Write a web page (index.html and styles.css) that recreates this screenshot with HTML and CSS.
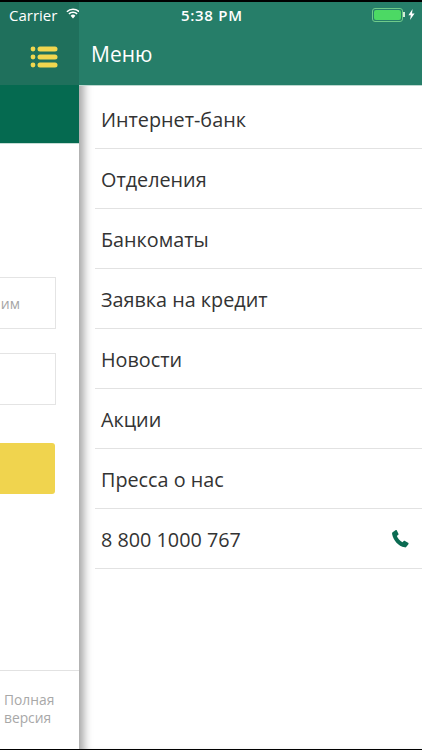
FILE: index.html
```html
<!DOCTYPE html>
<html lang="ru">

<head>
    <meta charset="UTF-8">
    <title>Меню</title>
    <link rel="stylesheet" href="styles.css">
</head>

<body>
    <div class="screen">
        <section class="page">
            <header class="page-head">
                <div class="status status-left">
                    <span>Carrier</span>
                    <svg class="wifi" width="16" height="12" viewBox="0 0 16 12">
                        <path d="M8 11.500 5.600 8.700a3.400 3.400 0 0 1 4.800 0Z" fill="#fff" />
                        <path d="M3.900 6.900a5.800 5.800 0 0 1 8.200 0M1.900 4.700a8.700 8.700 0 0 1 12.200 0" fill="none" stroke="#fff" stroke-width="1.600" />
                    </svg>
                </div>
                <div class="page-bar">
                    <svg class="list-icon" width="28" height="24" viewBox="0 0 28 24" fill="#f0d64f">
                        <circle cx="3" cy="4" r="2.400" />
                        <circle cx="3" cy="12" r="2.400" />
                        <circle cx="3" cy="20" r="2.400" />
                        <rect x="7.500" y="1.500" width="20" height="5" rx="2.500" />
                        <rect x="7.500" y="9.500" width="20" height="5" rx="2.500" />
                        <rect x="7.500" y="17.500" width="20" height="5" rx="2.500" />
                    </svg>
                </div>
            </header>
            <div class="page-sub"></div>
            <div class="page-body">
                <div class="field field-text">им</div>
                <div class="field"></div>
                <div class="submit"></div>
            </div>
            <footer class="page-foot">Полная<br>версия</footer>
        </section>
        <section class="menu">
            <header class="menu-head">
                <div class="status">
                    <span class="time">5:38 PM</span>
                    <div class="battery-wrap">
                        <span class="battery"><span class="battery-fill"></span></span>
                        <span class="battery-tip"></span>
                        <svg class="bolt" width="7" height="11" viewBox="0 0 7 11">
                            <path d="M4.600 0 .4 6.200h2.400L2 11l4.600-6.600H4Z" fill="#fff" />
                        </svg>
                    </div>
                </div>
                <h1 class="menu-title">Меню</h1>
            </header>
            <ul class="menu-list">
                <li>Интернет-банк</li>
                <li>Отделения</li>
                <li>Банкоматы</li>
                <li>Заявка на кредит</li>
                <li>Новости</li>
                <li>Акции</li>
                <li>Пресса о нас</li>
                <li class="phone">
                    8 800 1000 767
                    <svg width="19" height="18" viewBox="1.500 1 16.500 17">
                        <path d="M2.300 3.200 5 1.200c.5-.3 1-.2 1.300.3l1.500 3c.2.4.1.8-.2 1.100L6.300 6.700c.8 2.300 2.900 4.800 5.300 5.900l1.200-1.200c.3-.3.8-.4 1.200-.1l2.900 1.800c.5.300.6.800.3 1.300l-1.900 2.500c-.4.500-1 .7-1.600.5C7.500 16.200 3.200 11 1.800 4.800c-.1-.6.100-1.200.5-1.600Z" fill="#0b6b52" />
                    </svg>
                </li>
            </ul>
        </section>
    </div>
</body>

</html>
```

FILE: styles.css
```css
* {
    box-sizing: border-box;
}

body {
    margin: 0;
    background: #000;
    font-family: "Open Sans", "Liberation Sans", sans-serif;
}

.screen {
    display: flex;
    height: 750px;
    padding: 2px 0 1px;
    overflow: hidden;
}

.status {
    display: flex;
    align-items: center;
    height: 25px;
    color: #fff;
    font-size: 15px;
}

/* left part of the page, pushed off screen by the open menu */
.page {
    width: 79px;
    display: flex;
    flex-direction: column;
    background: #fff;
    overflow: hidden;
}

.page-head {
    height: 83px;
    background: #1f705c;
}

.status-left {
    padding-left: 9px;
    gap: 8px;
    white-space: nowrap;
}

.wifi {
    flex-shrink: 0;
    margin-top: -3px;
}

.page-bar {
    display: flex;
    justify-content: flex-end;
    padding: 18px 21px 0 0;
}

.page-sub {
    height: 59px;
    background: #056a50;
    border-bottom: 1px solid #c5dcd5;
}

.page-body {
    flex: 1;
    padding-top: 133px;
    padding-right: 23px;
    margin-left: -60px;
    border-bottom: 1px solid #e2e2e2;
}

.field {
    height: 52px;
    margin-bottom: 24px;
    border: 1px solid #e4e4e4;
}

.field-text {
    display: flex;
    align-items: center;
    justify-content: flex-end;
    padding-right: 35px;
    color: #a5a5a5;
    font-size: 14px;
}

.submit {
    height: 51px;
    margin-top: 38px;
    margin-right: 1px;
    background: #f0d44e;
    border-radius: 3px;
}

.page-foot {
    height: 78px;
    padding: 20px 0 0 4px;
    color: #a8a8a8;
    font-size: 13.800px;
    line-height: 18px;
    white-space: nowrap;
}

.menu {
    flex: 1;
    display: flex;
    flex-direction: column;
    background: #fff;
    box-shadow: inset 11px 0 8px -6px rgba(0, 0, 0, 0.35);
}

.menu-head {
    height: 83px;
    background: #267e69;
    box-shadow: 0 1px 0 #bcd8d0;
}

.menu-head .status {
    justify-content: space-between;
    padding-left: 102px;
    font-weight: 600;
}

.time {
    letter-spacing: 0.700px;
}

.battery-wrap {
    display: flex;
    align-items: center;
    margin-right: 7px;
}

.battery {
    width: 31px;
    height: 14px;
    padding: 1px;
    border: 1px solid #6fcb8a;
    border-radius: 3px;
}

.battery-fill {
    display: block;
    height: 100%;
    background: #4cd964;
    border-radius: 2px;
}

.battery-tip {
    width: 2px;
    height: 5px;
    background: #d5ecd9;
    margin-right: 3px;
}

.menu-title {
    margin: 0;
    padding: 13px 0 0 12px;
    color: #fff;
    font-size: 21px;
    font-weight: 400;
}

.menu-list {
    list-style: none;
    margin: 0;
    padding: 4px 0 0 16px;
}

.menu-list li {
    height: 60px;
    display: flex;
    align-items: center;
    justify-content: space-between;
    padding: 1px 12px 0 6px;
    color: #333;
    font-size: 19.800px;
    border-bottom: 1px solid #e2e2e2;
}
```
